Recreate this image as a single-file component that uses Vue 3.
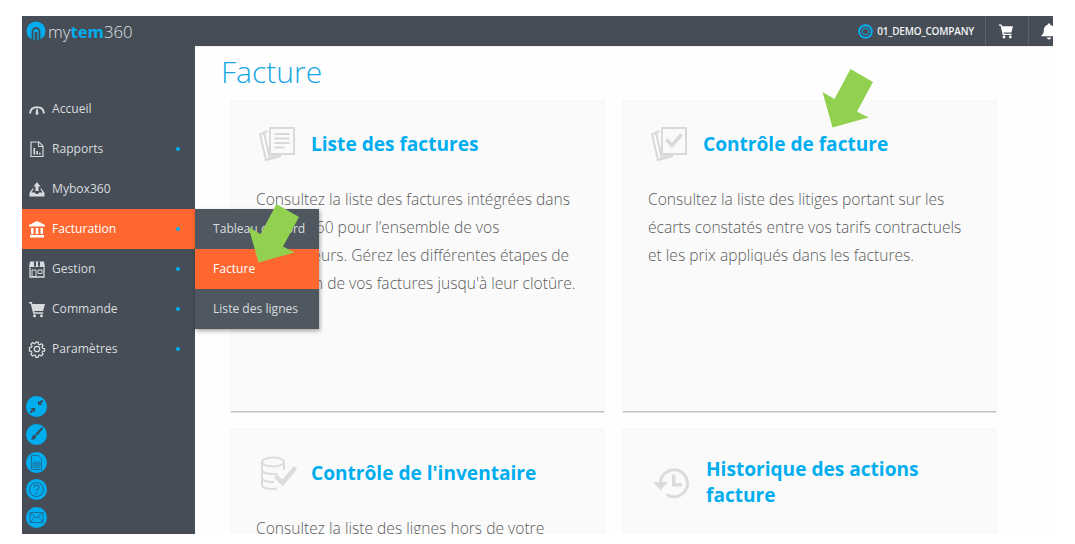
<template>
  <div class="frame">
    <header class="topbar">
      <div class="logo">
        <svg class="logo-mark" width="20" height="20" viewBox="0 0 20 20">
          <circle cx="10" cy="10" r="9.500" fill="#00aeef" />
          <path d="M6.500 19V10.500a3.500 3.500 0 0 1 7 0V19" fill="none" stroke="#464d56" stroke-width="1.800" />
          <path d="M8.700 11h2.600v9H8.700z" fill="#464d56" />
        </svg>
        <span class="logo-text">my<b>tem</b>360</span>
      </div>
      <div class="top-right">
        <div class="company">
          <svg width="15" height="15" viewBox="0 0 15 15">
            <circle cx="7.500" cy="7.500" r="6.300" fill="none" stroke="#00aeef" stroke-width="2" />
            <circle cx="7.500" cy="7.500" r="3.300" fill="none" stroke="#00aeef" stroke-width="1" />
          </svg>
          <span>01_DEMO_COMPANY</span>
        </div>
        <div class="top-btn">
          <svg width="16" height="16" viewBox="0 0 16 16" fill="#fff">
            <path d="M1 1.500h2.600l.5 1.800H15l-1.600 6.200H5.600l.3 1.200h7.600v1.300H4.800L2.600 2.800H1z" />
            <circle cx="6" cy="14" r="1.400" />
            <circle cx="12.300" cy="14" r="1.400" />
          </svg>
        </div>
        <div class="top-btn bell">
          <svg width="18" height="18" viewBox="0 0 18 18" fill="#fff">
            <path d="M9 1.500c.8 0 1.300.5 1.300 1.200 2.500.6 3.900 2.700 3.900 5.300 0 3 .9 4.300 2.300 5.500v.8H1.500v-.8C2.900 12.300 3.800 11 3.800 8c0-2.600 1.400-4.700 3.900-5.300C7.700 2 8.200 1.500 9 1.500z" />
            <path d="M7 15.500h4a2 2 0 0 1-4 0z" />
          </svg>
        </div>
      </div>
    </header>

    <div class="body">
      <aside class="sidebar">
        <nav class="menu">
          <a v-for="item in menu" :key="item.label" class="menu-item" :class="{ active: item.active }">
            <svg class="menu-icon" width="18" height="18" viewBox="0 0 18 18" v-html="item.icon"></svg>
            <span class="menu-label">{{ item.label }}</span>
            <i v-if="item.sub" class="dot"></i>
          </a>
        </nav>
        <div class="tools">
          <div v-for="tool in tools" :key="tool.name" class="tool">
            <svg width="21" height="21" viewBox="0 0 21 21" v-html="tool.icon"></svg>
          </div>
        </div>
      </aside>

      <main class="content">
        <h1 class="page-title">Facture</h1>
        <div class="cards">
          <section v-for="card in cards" :key="card.title" class="card">
            <div class="card-head" :class="{ tall: card.tall }">
              <svg class="card-icon" width="38" height="38" viewBox="0 0 38 38" v-html="card.icon"></svg>
              <h2>{{ card.title }}</h2>
            </div>
            <p>{{ card.text }}</p>
          </section>
        </div>
      </main>
    </div>

    <div class="submenu">
      <a class="sub-item">Tableau de bord</a>
      <a class="sub-item active">Facture</a>
      <a class="sub-item">Liste des lignes</a>
    </div>

    <svg class="arrow arrow-card" width="54" height="62" viewBox="0 0 54 62">
      <path d="M28.500 3 51 16 35 45.500 46.500 51.500 10.500 61.500 0.500 26 12.500 33z" fill="#92d050" />
    </svg>
    <svg class="arrow arrow-menu" width="54" height="62" viewBox="0 0 54 62">
      <path d="M28.500 3 51 16 35 45.500 46.500 51.500 10.500 61.500 0.500 26 12.500 33z" fill="#92d050" />
    </svg>
  </div>
</template>

<script setup>
const ink = '#d8dbde'

const menu = [
  {
    label: 'Accueil',
    icon: `<path d="M2 13.500C2.300 9.500 5.200 7.200 9 7.200s6.700 2.300 7 6.300" fill="none" stroke="${ink}" stroke-width="2"/><path d="M8.300 9h1.400l.7 4.600a1.400 1.400 0 0 1-2.800 0z" fill="${ink}"/>`
  },
  {
    label: 'Rapports',
    sub: true,
    icon: `<path d="M3 2h8l4 4v10.500H3z" fill="none" stroke="${ink}" stroke-width="1.200"/><path d="M10.500 2v4.500H15" fill="none" stroke="${ink}"/><path d="M5.500 8h1.600v6.500H5.500zM8.300 11h1.600v3.500H8.300zM11 12.700h1.600v1.800H11z" fill="${ink}"/>`
  },
  {
    label: 'Mybox360',
    icon: `<path d="M9 2 12.500 6.500h-2V11h-3V6.500h-2z" fill="${ink}"/><path d="M4.500 8.500 1.500 13v3.500h15V13l-3-4.500h-1.300l2.300 4h-3.300l-1 1.500H7.800l-1-1.500H3.500l2.300-4z" fill="${ink}"/>`
  },
  {
    label: 'Facturation',
    sub: true,
    active: true,
    icon: '<path d="M9 1 17 5v1.500H1V5zM2 15h14v2.500H2zM3 8h2.500v6H3zM7.700 8h2.600v6H7.700zM12.500 8H15v6h-2.500z" fill="#fff"/>'
  },
  {
    label: 'Gestion',
    sub: true,
    icon: `<path d="M2 1.500h14l1 5.500H1z" fill="${ink}"/><path d="M2 7.500V17h14V7.500" fill="none" stroke="${ink}" stroke-width="1.300"/><path d="M4 10h4v6.500H4zM10 10h4v3.500h-4z" fill="none" stroke="${ink}"/><path d="M6 1.500h2v5H6zM10 1.500h2v5h-2z" fill="#464d56"/>`
  },
  {
    label: 'Commande',
    sub: true,
    icon: `<path d="M1 2h2.800l.6 2H17l-1.800 7H6.300l.3 1.300h8.600v1.500H5.200L2.700 3.500H1z" fill="${ink}"/><circle cx="6.500" cy="15.800" r="1.500" fill="${ink}"/><circle cx="13.500" cy="15.800" r="1.500" fill="${ink}"/>`
  },
  {
    label: 'Paramètres',
    sub: true,
    icon: `<circle cx="9" cy="9" r="2.700" fill="none" stroke="${ink}" stroke-width="1.300"/><path d="M7.700 1.500h2.600l.4 2.200 1.300.6 1.900-1.200 1.900 1.900-1.200 1.900.6 1.300 2.200.4v2.600l-2.200.4-.6 1.300 1.200 1.900-1.900 1.900-1.900-1.200-1.300.6-.4 2.200H7.700l-.4-2.200-1.300-.6-1.900 1.200-1.900-1.900 1.200-1.900-.6-1.300-2.200-.4V7.400l2.200-.4.6-1.300-1.200-1.900 1.900-1.900L6 3.100l1.300-.6z" transform="translate(.9 .9) scale(.9)" fill="none" stroke="${ink}" stroke-width="1.400"/>`
  }
]

const toolInk = '#1f6f9c'

const tools = [
  {
    name: 'compress',
    icon: `<circle cx="10.500" cy="10.500" r="10.500" fill="#00aeef"/><path d="M12 9V4.500l1.600 1.600 2.400-2.400 1.300 1.300-2.400 2.400L16.500 9zM9 12v4.500l-1.600-1.600-2.400 2.400-1.300-1.300 2.400-2.400L4.500 12z" fill="#3b4a58"/>`
  },
  {
    name: 'brush',
    icon: `<circle cx="10.500" cy="10.500" r="10.500" fill="#00aeef"/><path d="M16.500 3.500c.6.500.4 1.300-.2 2L11 11.700 9.300 10 15 4c.5-.5 1-.9 1.500-.5zM8.700 10.800l1.500 1.500c-.1 2.200-2 3.800-5.700 3.400 1.500-.8 1.300-1.700 1.800-3 .4-1.100 1.300-1.800 2.400-1.900z" fill="#3b4a58"/>`
  },
  {
    name: 'sheet',
    icon: `<circle cx="10.500" cy="10.500" r="10.500" fill="#00aeef"/><path d="M5.500 3.500h7l3 3v11h-10z" fill="none" stroke="${toolInk}"/><path d="M7 10h7v5.500H7zM7 11.800h7M7 13.700h7M9.300 10v5.500M11.700 10v5.500" fill="none" stroke="${toolInk}" stroke-width=".7"/>`
  },
  {
    name: 'help',
    icon: `<circle cx="10.500" cy="10.500" r="10.500" fill="#00aeef"/><circle cx="10.500" cy="10.500" r="7" fill="none" stroke="${toolInk}" stroke-width="1.200"/><path d="M8 8.500c0-1.500 1.100-2.300 2.500-2.300s2.500.8 2.500 2.100c0 1.900-2.500 1.900-2.500 3.700" fill="none" stroke="${toolInk}" stroke-width="1.300"/><circle cx="10.500" cy="14.200" r=".9" fill="${toolInk}"/>`
  },
  {
    name: 'mail',
    icon: `<circle cx="10.500" cy="10.500" r="10.500" fill="#00aeef"/><path d="M4 5.500h13v10H4zM4 5.500l6.500 5.500L17 5.500M4 15.500l5-5.800M17 15.500l-5-5.800" fill="none" stroke="${toolInk}" stroke-width="1"/>`
  }
]

const stack = `<path d="M5 7 1 8.500 7 34l15-4" fill="none" stroke="#d9d9d9" stroke-width="2"/><path d="M8.500 5 5 6.500 10.500 31l12-2.500" fill="none" stroke="#d9d9d9" stroke-width="2"/>`

const cards = [
  {
    title: 'Liste des factures',
    text: "Consultez la liste des factures intégrées dans MyTEM360 pour l’ensemble de vos fournisseurs. Gérez les différentes étapes de validation de vos factures jusqu'à leur clotûre.",
    icon: `${stack}<path d="M11 2h24v26H11z" fill="#fafafa" stroke="#d9d9d9" stroke-width="2"/><path d="M15.500 8h15M15.500 12.500h15M15.500 17h15M15.500 21.500h10" stroke="#d9d9d9" stroke-width="2"/>`
  },
  {
    title: 'Contrôle de facture',
    text: 'Consultez la liste des litiges portant sur les écarts constatés entre vos tarifs contractuels et les prix appliqués dans les factures.',
    icon: `${stack}<path d="M11 2h24v26H11z" fill="#fafafa" stroke="#d9d9d9" stroke-width="2"/><path d="M15.500 13.500l5.500 6 9.500-11" fill="none" stroke="#d9d9d9" stroke-width="3.500"/>`
  },
  {
    title: "Contrôle de l'inventaire",
    text: 'Consultez la liste des lignes hors de votre inventaire et les écarts constatés sur la période.',
    icon: `<ellipse cx="14" cy="7" rx="11" ry="4.500" fill="none" stroke="#dcdcdc" stroke-width="2"/><path d="M3 7v23c0 2.500 5 4 11 4 2 0 3-.2 4-.4M25 7v8M3 15c0 2.500 5 4 11 4 2 0 3-.1 4-.3M3 23c0 2.500 5 4 11 4h1" fill="none" stroke="#dcdcdc" stroke-width="2"/><path d="M16.500 21l7 7L36.500 12.500" fill="none" stroke="#dcdcdc" stroke-width="4.500"/>`
  },
  {
    title: 'Historique des actions facture',
    text: '',
    tall: true,
    icon: `<path d="M9.500 19a13.500 13.500 0 1 1 6 11.500" fill="none" stroke="#dcdcdc" stroke-width="3"/><path d="M2 18h15l-7.500 8.500z" fill="#dcdcdc"/><path d="M21 10.500h3.500v8.500H31v3.500H21z" fill="#dcdcdc"/>`
  }
]
</script>

<style>
html,
body {
  background: #fff;
}
</style>

<style scoped>
* {
  box-sizing: border-box;
}

.frame {
  position: relative;
  width: 1031px;
  height: 518px;
  margin: 16px 22px 10px;
  overflow: hidden;
  display: flex;
  flex-direction: column;
  font-family: 'Open Sans', sans-serif;
}

.topbar {
  height: 30px;
  flex: none;
  background: #464d56;
  display: flex;
  justify-content: space-between;
  align-items: center;
}

.logo {
  display: flex;
  align-items: center;
  padding-left: 4px;
  gap: 2px;
}

.logo-mark {
  flex: none;
}

.logo-text {
  font-size: 16.700px;
  font-weight: 300;
  color: #dfe2e5;
}

.logo-text b {
  font-weight: 700;
  color: #00aeef;
}

.top-right {
  display: flex;
  height: 100%;
  align-items: center;
}

.company {
  display: flex;
  align-items: center;
  gap: 4px;
  padding-right: 11px;
  color: #f2f3f4;
  font-size: 10px;
  font-weight: 600;
  letter-spacing: -0.2px;
}

.top-btn {
  width: 43px;
  height: 30px;
  border-left: 1px solid #5a626b;
  display: flex;
  align-items: center;
  justify-content: center;
  padding-right: 3px;
}

.bell {
  width: 25px;
  justify-content: flex-start;
  padding: 0 0 0 11px;
  overflow: hidden;
}

.bell svg {
  flex: none;
}

.body {
  flex: 1;
  display: flex;
  min-height: 0;
}

.sidebar {
  width: 173px;
  flex: none;
  background: #464d56;
  padding-top: 43px;
}

.menu-item {
  position: relative;
  height: 40px;
  display: flex;
  align-items: center;
  padding-left: 6px;
  color: #d9dcdf;
  font-size: 12.100px;
  line-height: 38px;
}

.menu-item.active {
  background: #ff6731;
  color: #fff;
}

.menu-icon {
  flex: none;
}

.menu-label {
  margin-left: 6px;
}

.dot {
  position: absolute;
  left: 154px;
  top: 18px;
  width: 4px;
  height: 4px;
  border-radius: 50%;
  background: #00aeef;
}

.tools {
  margin-top: 27px;
  padding-left: 4px;
  display: flex;
  flex-direction: column;
  gap: 6.750px;
}

.tool {
  width: 21px;
  height: 21px;
}

.tool svg {
  display: block;
}

.content {
  flex: 1;
  min-width: 0;
  background: #fefefe;
  overflow: hidden;
  border-top: 1px solid #f1f1f1;
}

.page-title {
  margin: 0;
  padding-left: 26px;
  height: 53px;
  font-size: 30px;
  line-height: 49px;
  font-weight: 300;
  color: #14a7e2;
}

.cards {
  display: grid;
  grid-template-columns: 375px 375px;
  grid-auto-rows: 311px;
  gap: 18px 17px;
  padding-left: 35px;
}

.card {
  background: #fafafa;
  border: 1px solid #f6f6f6;
  border-bottom: 0;
  box-shadow: 0 2px 0 -0.500px #c4c4c4;
  padding: 0 25px;
}

.card-head {
  display: flex;
  align-items: center;
  gap: 14px;
  height: 86px;
  padding-left: 3px;
}

.card-head.tall {
  padding-top: 17px;
  gap: 17px;
}

.card-icon {
  flex: none;
  margin-top: 2px;
}

.card-head h2 {
  margin: 0;
  font-size: 19.100px;
  line-height: 26px;
  font-weight: 700;
  color: #00aeef;
}

.card p {
  margin: -2px 0 0;
  font-size: 15.600px;
  line-height: 28px;
  font-weight: 300;
  color: #5c5c5c;
}

.submenu {
  position: absolute;
  left: 173px;
  top: 193px;
  width: 124px;
  background: #4f5761;
  box-shadow: 1px 2px 4px rgba(0, 0, 0, 0.35);
}

.sub-item {
  height: 40px;
  display: flex;
  align-items: center;
  padding-left: 18px;
  color: #d9dcdf;
  font-size: 12.100px;
  line-height: 38px;
}

.sub-item.active {
  background: #ff6731;
  color: #fff;
}

.arrow {
  position: absolute;
}

.arrow-card {
  left: 799.500px;
  top: 50px;
}

.arrow-menu {
  left: 226px;
  top: 185px;
}
</style>
